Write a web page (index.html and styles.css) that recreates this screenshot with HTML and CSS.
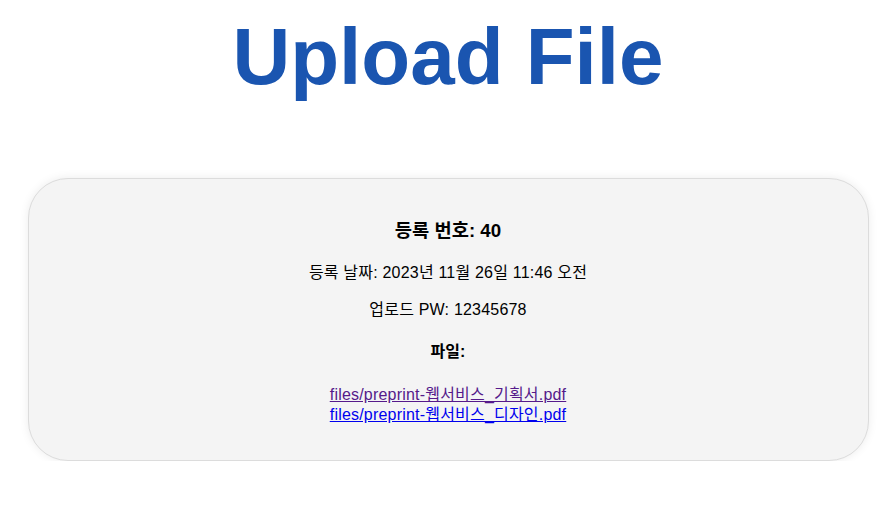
FILE: index.html
```html
<!DOCTYPE html>
<html lang="ko">
<head>
  <meta charset="UTF-8" />
  <meta name="viewport" content="width=device-width, initial-scale=1.0"/>
  <title>Upload File</title>
  <link rel="stylesheet" href="styles.css">
</head>
<body>

  <h1 class="title">Upload File</h1>

  <div class="card">
    <h3 class="card-number">등록 번호: 40</h3>
    <p class="card-row">등록 날짜: 2023년 11월 26일 11:46 오전</p>
    <p class="card-row">업로드 PW: 12345678</p>
    <h4 class="card-label">파일:</h4>
    <div class="file-list">
      <a href="#" class="visited">files/preprint-웹서비스_기획서.pdf</a><br>
      <a href="#">files/preprint-웹서비스_디자인.pdf</a>
    </div>
  </div>

</body>
</html>
```

FILE: styles.css
```css
* {
  box-sizing: border-box;
}

body {
  margin: 8px;
  font-family: "Liberation Sans", Arial, "Noto Sans CJK KR", sans-serif;
  color: #000;
  background: #fff;
}

.title {
  margin: 3px 0 75px;
  font-size: 80px;
  line-height: 92px;
  font-weight: bold;
  text-align: center;
  color: #1a55b0;
}

.card {
  width: 841px;
  margin: 0 auto;
  padding: 20px 0;
  background: #f4f4f4;
  border: 1px solid #dcdcdc;
  border-radius: 40px;
  box-shadow: 0 0 10px rgba(0, 0, 0, 0.08);
  text-align: center;
}

.card-number {
  margin: 21px 0 21px;
  font-size: 18.72px;
  line-height: 22px;
}

.card-row {
  margin: 0 0 17px;
  font-size: 16px;
  line-height: 20px;
  letter-spacing: 0.2px;
}

.card-row + .card-row {
  margin-bottom: 22px;
}

.card-label {
  margin: 0 0 23px;
  font-size: 16px;
  line-height: 20px;
}

.file-list {
  margin-bottom: 15px;
  font-size: 16px;
  line-height: 20px;
  letter-spacing: 0.2px;
}

.file-list a {
  color: #0000ee;
}

.file-list a.visited {
  color: #551a8b;
}
```
